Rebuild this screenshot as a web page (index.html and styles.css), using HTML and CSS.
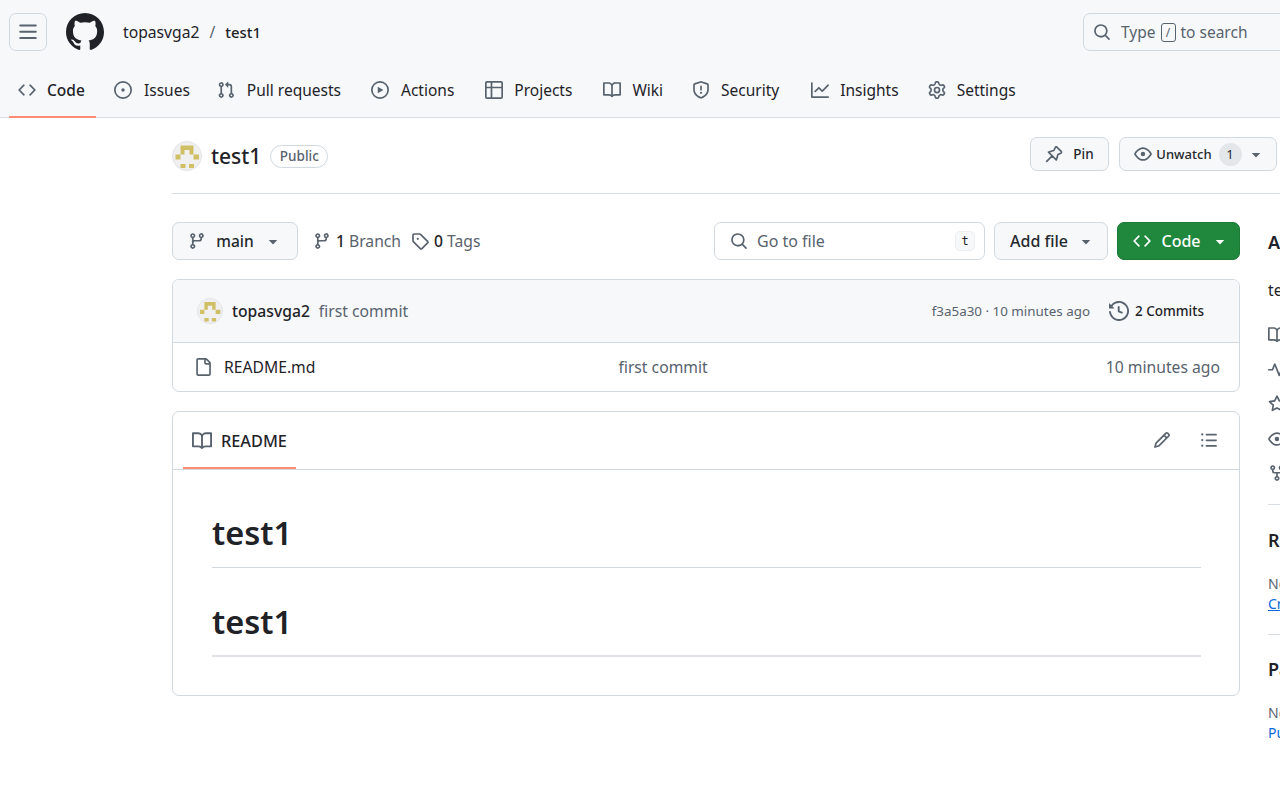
FILE: index.html
```html
<!DOCTYPE html>
<html lang="en">
<head>
<meta charset="utf-8">
<title>test1</title>
<link rel="stylesheet" href="styles.css">
</head>
<body>
<svg class="defs" width="0" height="0" aria-hidden="true">
<defs>
<symbol id="i-code" viewBox="0 0 16 16"><path d="m11.28 3.22 4.25 4.25a.75.75 0 0 1 0 1.06l-4.25 4.25a.749.749 0 0 1-1.275-.326.749.749 0 0 1 .215-.734L13.94 8l-3.72-3.72a.749.749 0 0 1 .326-1.275.749.749 0 0 1 .734.215Zm-6.56 0a.751.751 0 0 1 1.042.018.751.751 0 0 1 .018 1.042L2.06 8l3.72 3.72a.749.749 0 0 1-.326 1.275.749.749 0 0 1-.734-.215L.47 8.53a.75.75 0 0 1 0-1.06Z"/></symbol>
<symbol id="i-issue" viewBox="0 0 16 16"><path d="M8 9.5a1.5 1.5 0 1 0 0-3 1.5 1.5 0 0 0 0 3Z"/><path d="M8 0a8 8 0 1 1 0 16A8 8 0 0 1 8 0ZM1.5 8a6.5 6.5 0 1 0 13 0 6.5 6.5 0 0 0-13 0Z"/></symbol>
<symbol id="i-pr" viewBox="0 0 16 16"><path d="M1.5 3.25a2.25 2.25 0 1 1 3 2.122v5.256a2.251 2.251 0 1 1-1.5 0V5.372A2.25 2.25 0 0 1 1.5 3.25Zm5.677-.177L9.573.677A.25.25 0 0 1 10 .854V2.5h1A2.5 2.5 0 0 1 13.5 5v5.628a2.251 2.251 0 1 1-1.5 0V5a1 1 0 0 0-1-1h-1v1.646a.25.25 0 0 1-.427.177L7.177 3.427a.25.25 0 0 1 0-.354ZM3.75 2.5a.75.75 0 1 0 0 1.5.75.75 0 0 0 0-1.5Zm0 9.5a.75.75 0 1 0 0 1.5.75.75 0 0 0 0-1.5Zm8.25.75a.75.75 0 1 0 1.5 0 .75.75 0 0 0-1.5 0Z"/></symbol>
<symbol id="i-play" viewBox="0 0 16 16"><path d="M8 0a8 8 0 1 1 0 16A8 8 0 0 1 8 0ZM1.5 8a6.5 6.5 0 1 0 13 0 6.5 6.5 0 0 0-13 0Zm4.879-2.773 4.264 2.559a.25.25 0 0 1 0 .428l-4.264 2.559A.25.25 0 0 1 6 10.559V5.442a.25.25 0 0 1 .379-.215Z"/></symbol>
<symbol id="i-table" viewBox="0 0 16 16"><path d="M0 1.75C0 .784.784 0 1.75 0h12.5C15.216 0 16 .784 16 1.75v12.5A1.75 1.75 0 0 1 14.25 16H1.75A1.75 1.75 0 0 1 0 14.25ZM6.5 6.5v8h7.75a.25.25 0 0 0 .25-.25V6.5Zm8-1.5V1.75a.25.25 0 0 0-.25-.25H6.5V5Zm-13 1.5v7.75c0 .138.112.25.25.25H5v-8ZM5 5V1.5H1.75a.25.25 0 0 0-.25.25V5Z"/></symbol>
<symbol id="i-book" viewBox="0 0 16 16"><path d="M0 1.75A.75.75 0 0 1 .75 1h4.253c1.227 0 2.317.59 3 1.501A3.743 3.743 0 0 1 11.006 1h4.245a.75.75 0 0 1 .75.75v10.5a.75.75 0 0 1-.75.75h-4.507a2.25 2.25 0 0 0-1.591.659l-.622.621a.75.75 0 0 1-1.06 0l-.622-.621A2.25 2.25 0 0 0 5.258 13H.75a.75.75 0 0 1-.75-.75Zm7.251 10.324.004-5.073-.002-2.253A2.25 2.25 0 0 0 5.003 2.5H1.5v9h3.757a3.75 3.75 0 0 1 1.994.574ZM8.755 4.75l-.004 7.322a3.752 3.752 0 0 1 1.992-.572H14.5v-9h-3.495a2.25 2.25 0 0 0-2.25 2.25Z"/></symbol>
<symbol id="i-shield" viewBox="0 0 16 16"><path d="M7.467.133a1.748 1.748 0 0 1 1.066 0l5.25 1.68A1.75 1.75 0 0 1 15 3.48V7c0 1.566-.32 3.182-1.303 4.682-.983 1.498-2.585 2.813-5.032 3.855a1.697 1.697 0 0 1-1.33 0c-2.447-1.042-4.049-2.357-5.032-3.855C1.32 10.182 1 8.566 1 7V3.48a1.75 1.75 0 0 1 1.217-1.667Zm.61 1.429a.25.25 0 0 0-.153 0l-5.25 1.68a.25.25 0 0 0-.174.238V7c0 1.358.275 2.666 1.057 3.86.784 1.194 2.121 2.34 4.366 3.297a.196.196 0 0 0 .154 0c2.245-.956 3.582-2.104 4.366-3.298C13.225 9.666 13.5 8.36 13.5 7V3.48a.251.251 0 0 0-.174-.237l-5.25-1.68ZM8.75 4.75v3a.75.75 0 0 1-1.5 0v-3a.75.75 0 0 1 1.5 0ZM9 10.5a1 1 0 1 1-2 0 1 1 0 0 1 2 0Z"/></symbol>
<symbol id="i-graph" viewBox="0 0 16 16"><path d="M1.5 1.75V13.5h13.75a.75.75 0 0 1 0 1.5H.75a.75.75 0 0 1-.75-.75V1.75a.75.75 0 0 1 1.5 0Zm14.28 2.53-5.25 5.25a.75.75 0 0 1-1.06 0L7 7.06 4.28 9.78a.751.751 0 0 1-1.042-.018.751.751 0 0 1-.018-1.042l3.25-3.25a.75.75 0 0 1 1.06 0L10 7.94l4.72-4.72a.751.751 0 0 1 1.042.018.751.751 0 0 1 .018 1.042Z"/></symbol>
<symbol id="i-gear" viewBox="0 0 16 16"><path d="M8 0a8.2 8.2 0 0 1 .701.031C9.444.095 9.99.645 10.16 1.29l.288 1.107c.018.066.079.158.212.224.231.114.454.243.668.386.123.082.233.09.299.071l1.103-.303c.644-.176 1.392.021 1.82.63.27.385.506.792.704 1.218.315.675.111 1.422-.364 1.891l-.814.806c-.049.048-.098.147-.088.294.016.257.016.515 0 .772-.01.147.038.246.088.294l.814.806c.475.469.679 1.216.364 1.891a7.977 7.977 0 0 1-.704 1.217c-.428.61-1.176.807-1.82.63l-1.102-.302c-.067-.019-.177-.011-.3.071a5.909 5.909 0 0 1-.668.386c-.133.066-.194.158-.211.224l-.29 1.106c-.168.646-.715 1.196-1.458 1.26a8.006 8.006 0 0 1-1.402 0c-.743-.064-1.289-.614-1.458-1.26l-.289-1.106c-.018-.066-.079-.158-.212-.224a5.738 5.738 0 0 1-.668-.386c-.123-.082-.233-.09-.299-.071l-1.103.303c-.644.176-1.392-.021-1.82-.63a8.12 8.12 0 0 1-.704-1.218c-.315-.675-.111-1.422.363-1.891l.815-.806c.05-.048.098-.147.088-.294a6.214 6.214 0 0 1 0-.772c.01-.147-.038-.246-.088-.294l-.815-.806C.635 6.045.431 5.298.746 4.623a7.92 7.92 0 0 1 .704-1.217c.428-.61 1.176-.807 1.82-.63l1.102.302c.067.019.177.011.3-.071.214-.143.437-.272.668-.386.133-.066.194-.158.211-.224l.29-1.106C6.009.645 6.556.095 7.299.03 7.53.01 7.764 0 8 0Zm-.571 1.525c-.036.003-.108.036-.137.146l-.289 1.105c-.147.561-.549.967-.998 1.189-.173.086-.34.183-.5.29-.417.278-.97.423-1.529.27l-1.103-.303c-.109-.03-.175.016-.195.045-.22.312-.412.644-.573.99-.014.031-.021.11.059.19l.815.806c.411.406.562.957.53 1.456a4.709 4.709 0 0 0 0 .582c.032.499-.119 1.05-.53 1.456l-.815.806c-.081.08-.073.159-.059.19.162.346.353.677.573.989.02.03.085.076.195.046l1.102-.303c.56-.153 1.113-.008 1.53.27.161.107.328.204.501.29.447.222.85.629.997 1.189l.289 1.105c.029.109.101.143.137.146a6.6 6.6 0 0 0 1.142 0c.036-.003.108-.036.137-.146l.289-1.105c.147-.561.549-.967.998-1.189.173-.086.34-.183.5-.29.417-.278.97-.423 1.529-.27l1.103.303c.109.029.175-.016.195-.045.22-.313.411-.644.573-.99.014-.031.021-.11-.059-.19l-.815-.806c-.411-.406-.562-.957-.53-1.456a4.709 4.709 0 0 0 0-.582c-.032-.499.119-1.05.53-1.456l.815-.806c.081-.08.073-.159.059-.19a6.464 6.464 0 0 0-.573-.989c-.02-.03-.085-.076-.195-.046l-1.102.303c-.56.153-1.113.008-1.53-.27a4.44 4.44 0 0 0-.501-.29c-.447-.222-.85-.629-.997-1.189l-.289-1.105c-.029-.11-.101-.143-.137-.146a6.6 6.6 0 0 0-1.142 0ZM11 8a3 3 0 1 1-6 0 3 3 0 0 1 6 0ZM9.5 8a1.5 1.5 0 1 0-3.001.001A1.5 1.5 0 0 0 9.5 8Z"/></symbol>
<symbol id="i-github" viewBox="0 0 16 16"><path d="M8 0c4.42 0 8 3.58 8 8a8.013 8.013 0 0 1-5.45 7.59c-.4.08-.55-.17-.55-.38 0-.27.01-1.13.01-2.2 0-.75-.25-1.23-.54-1.48 1.78-.2 3.65-.88 3.65-3.95 0-.88-.31-1.59-.82-2.15.08-.2.36-1.02-.08-2.12 0 0-.67-.22-2.2.82-.64-.18-1.32-.27-2-.27-.68 0-1.36.09-2 .27-1.53-1.03-2.2-.82-2.2-.82-.44 1.1-.16 1.92-.08 2.12-.51.56-.82 1.28-.82 2.15 0 3.06 1.86 3.75 3.64 3.95-.23.2-.44.55-.51 1.07-.46.21-1.61.55-2.33-.66-.15-.24-.6-.83-1.23-.82-.67.01-.27.38.01.53.34.19.73.9.82 1.13.16.45.68 1.31 2.69.94 0 .67.01 1.3.01 1.49 0 .21-.15.45-.55.38A7.995 7.995 0 0 1 0 8c0-4.42 3.58-8 8-8Z"/></symbol>
<symbol id="i-bars" viewBox="0 0 16 16"><path d="M1 2.75A.75.75 0 0 1 1.75 2h12.5a.75.75 0 0 1 0 1.5H1.75A.75.75 0 0 1 1 2.75Zm0 5A.75.75 0 0 1 1.75 7h12.5a.75.75 0 0 1 0 1.5H1.75A.75.75 0 0 1 1 7.75ZM1.75 12h12.5a.75.75 0 0 1 0 1.5H1.75a.75.75 0 0 1 0-1.5Z"/></symbol>
<symbol id="i-search" viewBox="0 0 16 16"><path d="M10.68 11.74a6 6 0 0 1-7.922-8.982 6 6 0 0 1 8.982 7.922l3.04 3.04a.749.749 0 0 1-.326 1.275.749.749 0 0 1-.734-.215ZM11.5 7a4.499 4.499 0 1 0-8.997 0A4.499 4.499 0 0 0 11.5 7Z"/></symbol>
<symbol id="i-pin" viewBox="0 0 16 16"><path fill="none" stroke="currentColor" stroke-width="1.5" stroke-linecap="round" stroke-linejoin="round" d="M10.3 1.6 14.4 5.7a1 1 0 0 1-.3 1.6l-2.6 1.2-1.1 3.9-.4.9L3.1 6.4l.9-.4 3.900-1.100 1.200-2.600a1 1 0 0 1 1.200-.7ZM6.400 9.600 1.500 14.500"/></symbol>
<symbol id="i-eye" viewBox="0 0 16 16"><path d="M8 2c1.981 0 3.671.992 4.933 2.078 1.27 1.091 2.187 2.345 2.637 3.023a1.62 1.62 0 0 1 0 1.798c-.45.678-1.367 1.932-2.637 3.023C11.67 13.008 9.981 14 8 14c-1.981 0-3.671-.992-4.933-2.078C1.797 10.83.88 9.576.43 8.898a1.62 1.62 0 0 1 0-1.798c.45-.677 1.367-1.931 2.637-3.022C4.33 2.992 6.019 2 8 2ZM1.679 7.932a.12.12 0 0 0 0 .136c.411.622 1.241 1.75 2.366 2.717C5.176 11.758 6.527 12.5 8 12.5c1.473 0 2.825-.742 3.955-1.715 1.124-.967 1.954-2.096 2.366-2.717a.12.12 0 0 0 0-.136c-.412-.621-1.242-1.75-2.366-2.717C10.824 4.242 9.473 3.5 8 3.5c-1.473 0-2.825.742-3.955 1.715-1.124.967-1.954 2.096-2.366 2.717ZM8 10a2 2 0 1 1-.001-3.999A2 2 0 0 1 8 10Z"/></symbol>
<symbol id="i-branch" viewBox="0 0 16 16"><path d="M9.5 3.25a2.25 2.25 0 1 1 3 2.122V6A2.5 2.5 0 0 1 10 8.5H6a1 1 0 0 0-1 1v1.128a2.251 2.251 0 1 1-1.5 0V5.372a2.25 2.25 0 1 1 1.5 0v1.836A2.493 2.493 0 0 1 6 7h4a1 1 0 0 0 1-1v-.628A2.25 2.25 0 0 1 9.5 3.25Zm-6 0a.75.75 0 1 0 1.5 0 .75.75 0 0 0-1.5 0Zm8.25-.75a.75.75 0 1 0 0 1.5.75.75 0 0 0 0-1.5ZM4.25 12a.75.75 0 1 0 0 1.5.75.75 0 0 0 0-1.5Z"/></symbol>
<symbol id="i-tag" viewBox="0 0 16 16"><path d="M1 7.775V2.75C1 1.784 1.784 1 2.75 1h5.025c.464 0 .91.184 1.238.513l6.25 6.25a1.75 1.75 0 0 1 0 2.474l-5.026 5.026a1.75 1.75 0 0 1-2.474 0l-6.25-6.25A1.752 1.752 0 0 1 1 7.775Zm1.5 0c0 .066.026.13.073.177l6.25 6.25a.25.25 0 0 0 .354 0l5.025-5.025a.25.25 0 0 0 0-.354l-6.25-6.25a.25.25 0 0 0-.177-.073H2.75a.25.25 0 0 0-.25.25ZM6 5a1 1 0 1 1 0 2 1 1 0 0 1 0-2Z"/></symbol>
<symbol id="i-history" viewBox="0 0 16 16"><path d="m.427 1.927 1.215 1.215a8.002 8.002 0 1 1-1.6 5.685.75.75 0 1 1 1.493-.154 6.5 6.5 0 1 0 1.18-4.458l1.358 1.358A.25.25 0 0 1 3.896 6H.25A.25.25 0 0 1 0 5.75V2.104a.25.25 0 0 1 .427-.177ZM7.75 4a.75.75 0 0 1 .75.75v2.992l2.028.812a.75.75 0 0 1-.557 1.392l-2.5-1A.751.751 0 0 1 7 8.25v-3.5A.75.75 0 0 1 7.75 4Z"/></symbol>
<symbol id="i-file" viewBox="0 0 16 16"><path d="M2 1.75C2 .784 2.784 0 3.75 0h6.586c.464 0 .909.184 1.237.513l2.914 2.914c.329.328.513.773.513 1.237v9.586A1.75 1.75 0 0 1 13.25 16h-9.5A1.75 1.75 0 0 1 2 14.25Zm1.75-.25a.25.25 0 0 0-.25.25v12.5c0 .138.112.25.25.25h9.5a.25.25 0 0 0 .25-.25V6h-2.75A1.75 1.75 0 0 1 9 4.25V1.5Zm6.75.062V4.25c0 .138.112.25.25.25h2.688l-.011-.013-2.914-2.914-.013-.011Z"/></symbol>
<symbol id="i-pencil" viewBox="0 0 16 16"><path d="M11.013 1.427a1.75 1.75 0 0 1 2.474 0l1.086 1.086a1.75 1.75 0 0 1 0 2.474l-8.61 8.61c-.21.21-.47.364-.756.445l-3.251.93a.75.75 0 0 1-.927-.928l.929-3.25c.081-.286.235-.547.445-.758l8.61-8.61Zm.176 4.823L9.75 4.81l-6.286 6.287a.253.253 0 0 0-.064.108l-.558 1.953 1.953-.558a.253.253 0 0 0 .108-.064Zm1.238-3.763a.25.25 0 0 0-.354 0L10.811 3.75l1.439 1.44 1.263-1.263a.25.25 0 0 0 0-.354Z"/></symbol>
<symbol id="i-list" viewBox="0 0 16 16"><path d="M5.75 2.5h8.5a.75.75 0 0 1 0 1.5h-8.5a.75.75 0 0 1 0-1.5Zm0 5h8.5a.75.75 0 0 1 0 1.5h-8.5a.75.75 0 0 1 0-1.5Zm0 5h8.5a.75.75 0 0 1 0 1.5h-8.5a.75.75 0 0 1 0-1.5ZM2 14a1 1 0 1 1 0-2 1 1 0 0 1 0 2Zm1-6a1 1 0 1 1-2 0 1 1 0 0 1 2 0ZM2 4a1 1 0 1 1 0-2 1 1 0 0 1 0 2Z"/></symbol>
<symbol id="i-caret" viewBox="0 0 16 16"><path d="m4.427 7.427 3.396 3.396a.25.25 0 0 0 .354 0l3.396-3.396A.25.25 0 0 0 11.396 7H4.604a.25.25 0 0 0-.177.427Z"/></symbol>
<symbol id="i-pulse" viewBox="0 0 16 16"><path d="M6 2c.306 0 .582.187.696.471L10 10.731l1.304-3.26A.751.751 0 0 1 12 7h3.25a.75.75 0 0 1 0 1.5h-2.742l-1.812 4.528a.751.751 0 0 1-1.392 0L6 4.77 4.696 8.03A.75.75 0 0 1 4 8.5H.75a.75.75 0 0 1 0-1.5h2.742l1.812-4.529A.751.751 0 0 1 6 2Z"/></symbol>
<symbol id="i-star" viewBox="0 0 16 16"><path d="M8 .25a.75.75 0 0 1 .673.418l1.882 3.815 4.21.612a.75.75 0 0 1 .416 1.279l-3.046 2.97.719 4.192a.751.751 0 0 1-1.088.791L8 12.347l-3.766 1.98a.75.75 0 0 1-1.088-.79l.72-4.194L.818 6.374a.75.75 0 0 1 .416-1.28l4.21-.611L7.327.668A.75.75 0 0 1 8 .25Zm0 2.445L6.615 5.5a.75.75 0 0 1-.564.41l-3.097.45 2.24 2.184a.75.75 0 0 1 .216.664l-.528 3.084 2.769-1.456a.75.75 0 0 1 .698 0l2.77 1.456-.53-3.084a.75.75 0 0 1 .216-.664l2.24-2.183-3.096-.45a.75.75 0 0 1-.564-.41L8 2.694Z"/></symbol>
<symbol id="i-fork" viewBox="0 0 16 16"><path d="M5 5.372v.878c0 .414.336.75.75.75h4.5a.75.75 0 0 0 .75-.75v-.878a2.25 2.25 0 1 1 1.5 0v.878a2.25 2.25 0 0 1-2.25 2.25h-1.5v2.128a2.251 2.251 0 1 1-1.5 0V8.5h-1.5A2.25 2.25 0 0 1 3.5 6.25v-.878a2.25 2.25 0 1 1 1.5 0ZM5 3.25a.75.75 0 1 0-1.5 0 .75.75 0 0 0 1.5 0Zm6.75.75a.75.75 0 1 0 0-1.5.75.75 0 0 0 0 1.5Zm-3 8.75a.75.75 0 1 0-1.5 0 .75.75 0 0 0 1.5 0Z"/></symbol>
<symbol id="i-avatar" viewBox="0 0 30 30"><circle cx="15" cy="15" r="14.500" fill="#f0f0f0" stroke="#e2e3e5"/><path fill="#d0bf64" d="M8.500 4.500h13v9h-4v-4.500h-5v4.500h-4zM3.500 13.500h5v5h-5zM21.500 13.500h5.500v5h-5.500zM8.500 23h5v4h-5zM17 23h5v4h-5z"/></symbol>
</defs>
</svg>

<header class="site-head">
  <div class="top-bar">
    <button class="menu-btn" type="button"><svg class="ico-md ico-muted"><use href="#i-bars"/></svg></button>
    <svg class="logo"><use href="#i-github"/></svg>
    <nav class="crumbs"><a>topasvga2</a><span class="sep">/</span><a class="crumb-strong">test1</a></nav>
    <div class="site-search">
      <svg class="ico ico-muted"><use href="#i-search"/></svg>
      <span>Type</span><kbd class="slash-key">/</kbd><span>to search</span>
    </div>
  </div>
  <nav class="tabs">
    <a class="tab tab-active"><svg class="ico ico-muted"><use href="#i-code"/></svg>Code</a>
    <a class="tab"><svg class="ico ico-muted"><use href="#i-issue"/></svg>Issues</a>
    <a class="tab"><svg class="ico ico-muted"><use href="#i-pr"/></svg>Pull requests</a>
    <a class="tab"><svg class="ico ico-muted"><use href="#i-play"/></svg>Actions</a>
    <a class="tab"><svg class="ico ico-muted"><use href="#i-table"/></svg>Projects</a>
    <a class="tab"><svg class="ico ico-muted"><use href="#i-book"/></svg>Wiki</a>
    <a class="tab"><svg class="ico ico-muted"><use href="#i-shield"/></svg>Security</a>
    <a class="tab"><svg class="ico ico-muted"><use href="#i-graph"/></svg>Insights</a>
    <a class="tab"><svg class="ico ico-muted"><use href="#i-gear"/></svg>Settings</a>
  </nav>
</header>

<main class="page">
  <div class="repo-head">
    <svg class="avatar-lg"><use href="#i-avatar"/></svg>
    <h1 class="repo-name">test1</h1>
    <span class="pill">Public</span>
    <div class="repo-actions">
      <button class="btn btn-pin" type="button"><svg class="ico ico-muted"><use href="#i-pin"/></svg>Pin</button>
      <button class="btn btn-watch" type="button"><svg class="ico ico-muted"><use href="#i-eye"/></svg>Unwatch<span class="counter">1</span><svg class="ico ico-muted"><use href="#i-caret"/></svg></button>
      <button class="btn" type="button"><svg class="ico ico-muted"><use href="#i-fork"/></svg>Fork</button>
    </div>
  </div>

  <div class="columns">
    <section class="content">
      <div class="toolbar">
        <button class="btn btn-lg btn-branch" type="button"><svg class="ico ico-muted"><use href="#i-branch"/></svg><span>main</span><svg class="ico ico-muted"><use href="#i-caret"/></svg></button>
        <a class="meta-link meta-branch"><svg class="ico ico-muted"><use href="#i-branch"/></svg><b>1</b> Branch</a>
        <a class="meta-link"><svg class="ico ico-muted"><use href="#i-tag"/></svg><b>0</b> Tags</a>
        <div class="file-search">
          <svg class="ico ico-muted"><use href="#i-search"/></svg>
          <span class="file-search-text">Go to file</span>
          <kbd class="t-key">t</kbd>
        </div>
        <button class="btn btn-lg btn-add" type="button"><span>Add file</span><svg class="ico ico-muted"><use href="#i-caret"/></svg></button>
        <button class="btn btn-lg btn-green" type="button"><svg class="ico"><use href="#i-code"/></svg><span>Code</span><svg class="ico"><use href="#i-caret"/></svg></button>
      </div>

      <div class="box files">
        <div class="commit-row">
          <svg class="avatar-sm"><use href="#i-avatar"/></svg>
          <a class="author">topasvga2</a>
          <span class="commit-msg">first commit</span>
          <span class="commit-meta">f3a5a30 · 10 minutes ago</span>
          <a class="commit-count"><svg class="ico-md ico-muted"><use href="#i-history"/></svg>2 Commits</a>
        </div>
        <div class="file-row">
          <svg class="ico ico-muted"><use href="#i-file"/></svg>
          <a class="file-name">README.md</a>
          <span class="file-msg">first commit</span>
          <span class="file-age">10 minutes ago</span>
        </div>
      </div>

      <div class="box readme">
        <div class="readme-head">
          <a class="readme-tab"><svg class="ico-md ico-muted"><use href="#i-book"/></svg>README</a>
          <div class="readme-tools">
            <svg class="ico ico-muted"><use href="#i-pencil"/></svg>
            <svg class="ico ico-muted"><use href="#i-list"/></svg>
          </div>
        </div>
        <article class="markdown">
          <h2>test1</h2>
          <h2>test1</h2>
        </article>
      </div>
    </section>

    <aside class="sidebar">
      <h3 class="side-about">About</h3>
      <p class="side-desc">test1</p>
      <ul class="side-list">
        <li><svg class="ico ico-muted"><use href="#i-book"/></svg>Readme</li>
        <li><svg class="ico ico-muted"><use href="#i-pulse"/></svg>Activity</li>
        <li><svg class="ico ico-muted"><use href="#i-star"/></svg>0 stars</li>
        <li><svg class="ico ico-muted"><use href="#i-eye"/></svg>1 watching</li>
        <li><svg class="ico ico-muted"><use href="#i-fork"/></svg>0 forks</li>
      </ul>
      <div class="side-section side-releases">
        <h3>Releases</h3>
        <p class="side-note">No releases published</p>
        <a class="side-link side-link-u">Create a new release</a>
      </div>
      <div class="side-section side-packages">
        <h3>Packages</h3>
        <p class="side-note">No packages published</p>
        <a class="side-link">Publish your first package</a>
      </div>
    </aside>
  </div>
</main>
</body>
</html>
```
FILE: styles.css
```css
* { box-sizing: border-box; }
html, body { margin: 0; height: 100%; overflow: hidden; background: #fff; }
body { width: 1280px; font-family: "Noto Sans", "Open Sans", sans-serif; font-size: 15.7px; color: #1f2328; }
.defs { position: absolute; }
a { color: inherit; text-decoration: none; }
button { font: inherit; color: inherit; }
svg { display: block; flex: none; fill: currentColor; }
.ico { width: 18px; height: 18px; }
.ico-md { width: 20px; height: 20px; }
.ico-muted { color: #59636e; }

.site-head { height: 118px; padding-top: 13px; background: #f6f8fa; border-bottom: 1px solid #d8dee4; }
.top-bar { display: flex; align-items: center; width: 1400px; height: 38px; margin-bottom: 14px; padding-left: 9px; }
.menu-btn { flex: none; width: 38px; height: 38px; display: flex; align-items: center; justify-content: center; padding: 0; border: 1px solid #d1d9e0; border-radius: 7px; background: #f6f8fa; }
.logo { width: 38px; height: 38px; margin-left: 19px; color: #1f2328; }
.crumbs { display: flex; align-items: center; margin-left: 19px; }
.sep { margin: 0 10px; color: #59636e; }
.crumb-strong { font-weight: 500; font-size: 14.8px; }
.site-search { flex: none; display: flex; align-items: center; width: 317px; height: 38px; margin-left: auto; padding-left: 9px; border: 1px solid #d1d9e0; border-radius: 7px; color: #59636e; font-size: 15.5px; }
.site-search .ico { margin-right: 10px; }
.slash-key { width: 15px; height: 19px; margin: 0 5px; display: flex; align-items: center; justify-content: center; border: 1px solid #59636e; border-radius: 3px; font: 12px "Noto Sans", sans-serif; }

.tabs { display: flex; height: 53px; padding-left: 9px; font-size: 15.5px; }
.tab { display: flex; align-items: center; gap: 11px; height: 53px; padding: 0 9px 2px; border-bottom: 2px solid transparent; margin-right: 12px; white-space: nowrap; }
.tab-active { width: 87px; border-bottom-color: #fd8c73; font-weight: 500; margin-right: 9px; }
.tab:nth-child(2) { gap: 12px; margin-right: 9px; }
.tab:nth-child(3) { gap: 12px; margin-right: 12px; }
.tab:nth-child(4) { gap: 12px; margin-right: 13px; }
.tab:nth-child(5) { margin-right: 13px; }
.tab:nth-child(6) { margin-right: 11px; }
.tab:nth-child(7) { margin-right: 14px; }
.tab:nth-child(8) { margin-right: 11px; }

.page { padding-left: 172px; width: 1500px; }
.repo-head { display: flex; align-items: center; height: 76px; padding-top: 1px; border-bottom: 1px solid #d8dee4; }
.avatar-lg { width: 30px; height: 30px; }
.repo-name { margin: 0 0 0 9px; font-size: 21px; font-weight: 500; line-height: 30px; }
.pill { width: 58px; margin-left: 9px; height: 23px; line-height: 21px; border: 1px solid #d1d9e0; border-radius: 12px; text-align: center; font-size: 13.5px; color: #59636e; font-weight: 500; }
.repo-actions { display: flex; gap: 10px; margin-left: 702px; margin-bottom: 4px; }

.btn { flex: none; display: flex; align-items: center; height: 34px; padding: 0 14px; border: 1px solid #d1d9e0; border-radius: 7px; background: #f6f8fa; font-size: 13.5px; font-weight: 500; white-space: nowrap; color: #25292e; }
.btn-pin { width: 79px; gap: 10px; }
.btn-watch { width: 158px; padding-left: 14px; gap: 4px; font-size: 13px; }
.counter { flex: none; width: 23px; height: 23px; line-height: 23px; margin: 0 1px 0 3px; border-radius: 50%; background: #e4e7ea; text-align: center; font-weight: 400; }
.btn-lg { height: 38px; font-size: 15.5px; }

.columns { display: flex; gap: 28px; padding-top: 28px; align-items: flex-start; }
.content { width: 1068px; flex: none; }
.toolbar { display: flex; align-items: center; height: 38px; }
.btn-branch { width: 126px; padding: 0 15px; justify-content: space-between; }
.meta-link { display: flex; align-items: center; color: #59636e; white-space: nowrap; }
.meta-link .ico { margin-right: 5px; }
.meta-link b { font-weight: 500; color: #1f2328; margin-right: 4px; }
.meta-branch { margin-left: 15px; margin-right: 10px; }
.file-search { display: flex; align-items: center; width: 271px; height: 38px; margin-left: auto; padding: 0 9px 0 15px; border: 1px solid #d1d9e0; border-radius: 7px; color: #59636e; font-size: 16px; }
.file-search-text { margin-left: 9px; }
.t-key { margin-left: auto; width: 20px; height: 20px; border: 1px solid #eceff2; border-radius: 5px; background: #f6f8fa; text-align: center; font: 12px/18px "DejaVu Sans Mono", monospace; color: #1f2328; }
.btn-add { width: 114px; margin-left: 9px; justify-content: space-between; padding: 0 12px 0 15px; font-size: 16px; }
.btn-green { width: 123px; margin-left: 9px; padding: 0 10px 0 15px; justify-content: space-between; background: #1f883d; border-color: #1c7a37; color: #fff; font-size: 16px; }

.box { border: 1px solid #d1d9e0; border-radius: 7px; }
.files { margin-top: 19px; height: 113px; overflow: hidden; }
.commit-row { display: flex; align-items: center; height: 63px; padding: 0 35px 0 24px; background: #f6f8fa; border-bottom: 1px solid #d1d9e0; }
.avatar-sm { width: 26px; height: 26px; }
.author { margin-left: 9px; font-weight: 500; white-space: nowrap; }
.commit-msg { margin-left: 9px; color: #59636e; }
.commit-meta { margin-left: auto; font-size: 13.4px; color: #59636e; }
.commit-count { display: flex; align-items: center; gap: 6px; margin-left: 19px; font-size: 13.5px; font-weight: 500; }
.file-row { display: flex; align-items: center; height: 48px; padding: 0 19px 0 21px; }
.file-name { margin-left: 12px; }
.file-msg { margin-left: 303px; color: #59636e; }
.file-age { margin-left: auto; color: #59636e; }

.readme { margin-top: 19px; height: 285px; }
.readme-head { display: flex; align-items: flex-start; height: 58px; padding: 0 21px 0 10px; border-bottom: 1px solid #d1d9e0; }
.readme-tab { display: flex; align-items: center; gap: 9px; width: 113px; height: 57px; padding: 2px 0 0 9px; border-bottom: 2px solid #fd8c73; font-weight: 500; font-size: 16.3px; }
.readme-tools { display: flex; gap: 29px; margin-left: auto; padding-top: 19px; }
.markdown { padding: 43px 38px 0 39px; }
.markdown h2 { margin: 0 0 34px; height: 55px; font-size: 32.5px; font-weight: 600; line-height: 40px; border-bottom: 1px solid #d1d9e0; }
.markdown h2 + h2 { border-bottom: 2px solid #dfe3e8; }

.sidebar { width: 280px; flex: none; }
.sidebar h3 { margin: 0; font-size: 18px; font-weight: 600; line-height: 24px; }
.sidebar .side-about { padding-top: 8px; line-height: 24px; }
.side-desc { margin: 25px 0 0; line-height: 22px; }
.side-list { list-style: none; margin: 17px 0 0; padding: 0; }
.side-list li { display: flex; align-items: center; gap: 8px; height: 34.5px; color: #59636e; }
.side-section { border-top: 1px solid #d8dee4; }
.side-releases { margin-top: 13.75px; padding-top: 23px; }
.side-packages { margin-top: 21px; padding-top: 22px; }
.side-note { margin: 23px 0 0; font-size: 14px; line-height: 18px; color: #59636e; }
.side-link { display: block; margin-top: 2px; font-size: 14px; line-height: 18px; color: #0969da; }
.side-link-u { text-decoration: underline; }
```
